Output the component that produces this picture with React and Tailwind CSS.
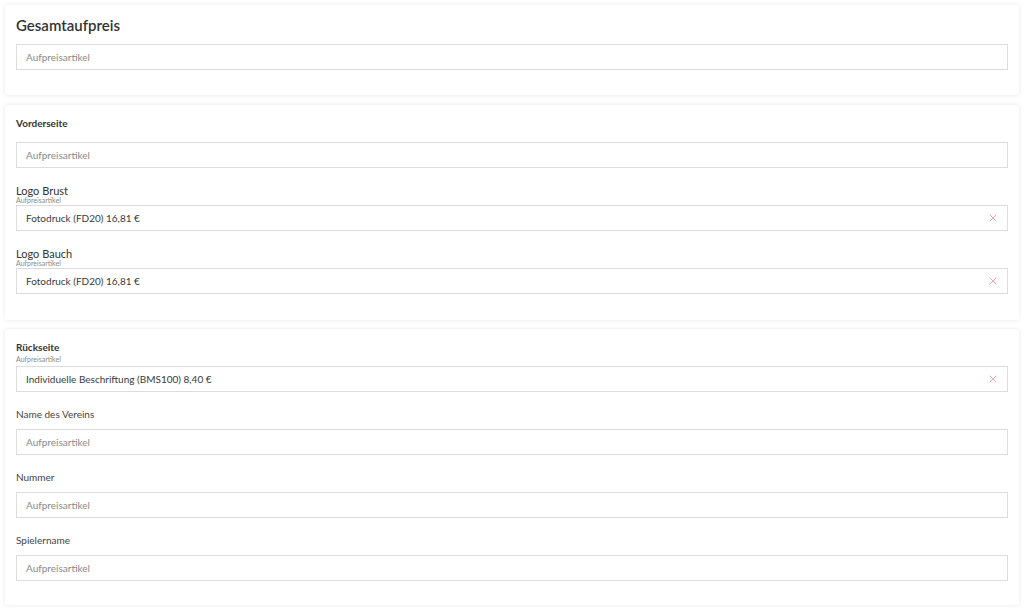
import { X } from "lucide-react";

function Field({ value, placeholder = "Aufpreisartikel" }) {
  return (
    <div className="flex h-[26px] items-center justify-between border border-[#dcdcdc] bg-white pl-[9px] pr-[8px]">
      {value ? (
        <span className="text-[10px] text-[#3a3a3a]">{value}</span>
      ) : (
        <span className="text-[10px] text-[#8a8a8a]">{placeholder}</span>
      )}
      {value && <X size={12} strokeWidth={1.6} className="text-[#e39090]" />}
    </div>
  );
}

function Card({ children, className = "" }) {
  return (
    <div className={`rounded-[3px] bg-white px-[11px] shadow-[0_0_5px_rgba(0,0,0,0.09)] ${className}`}>
      {children}
    </div>
  );
}

export default function App() {
  return (
    <div
      className="min-h-[612px] bg-white px-[5px] pt-[5px] pb-[6px] text-[#333]"
      style={{ fontFamily: "Lato, 'Noto Sans', sans-serif" }}
    >
      <Card className="pt-[10px] pb-[25px]">
        <h1 className="mb-[9px] text-[15px] leading-[20px] font-semibold text-[#333]">Gesamtaufpreis</h1>
        <Field />
      </Card>

      <Card className="mt-[10px] pt-[11px] pb-[26px]">
        <div className="text-[10px] leading-[14px] font-bold text-[#333]">Vorderseite</div>
        <div className="mt-[12px]">
          <Field />
        </div>

        <div className="mt-[17px]">
          <div className="text-[11px] leading-[12px] text-[#333]">Logo Brust</div>
          <div className="mb-[1px] text-[7px] leading-[7px] text-[#8a8a8a]">Aufpreisartikel</div>
          <Field value="Fotodruck (FD20) 16,81 €" />
        </div>

        <div className="mt-[17px]">
          <div className="text-[11px] leading-[12px] text-[#333]">Logo Bauch</div>
          <div className="mb-[1px] text-[7px] leading-[7px] text-[#8a8a8a]">Aufpreisartikel</div>
          <Field value="Fotodruck (FD20) 16,81 €" />
        </div>
      </Card>

      <Card className="mt-[9px] pt-[11px] pb-[24px]">
        <div className="text-[10px] leading-[14px] font-bold text-[#333]">Rückseite</div>
        <div className="mb-[3px] mt-[1px] text-[7px] leading-[8px] text-[#8a8a8a]">Aufpreisartikel</div>
        <Field value="Individuelle Beschriftung (BMS100) 8,40 €" />

        <div className="mt-[15px] text-[10px] leading-[14px] text-[#444]">Name des Vereins</div>
        <div className="mt-[8px]">
          <Field />
        </div>

        <div className="mt-[15px] text-[10px] leading-[14px] text-[#444]">Nummer</div>
        <div className="mt-[8px]">
          <Field />
        </div>

        <div className="mt-[15px] text-[10px] leading-[14px] text-[#444]">Spielername</div>
        <div className="mt-[8px]">
          <Field />
        </div>
      </Card>
    </div>
  );
}
